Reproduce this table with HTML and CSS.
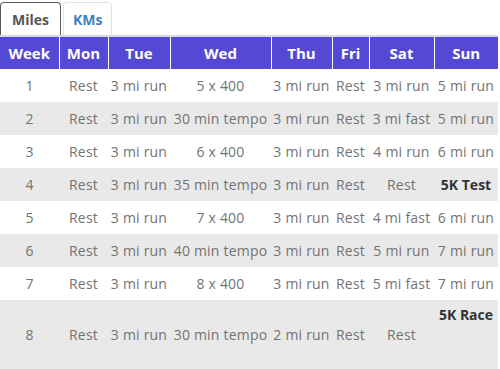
FILE: index.html
```html
<!DOCTYPE html>
<html>
<head>
<meta charset="utf-8">
<link rel="stylesheet" href="styles.css">
</head>
<body>
<div class="wrap">
  <div class="tabs">
    <div class="tab active">Miles</div>
    <div class="tab">KMs</div>
  </div>
  <table class="plan">
    <colgroup>
      <col class="c-week"><col class="c-mon"><col class="c-tue"><col class="c-wed">
      <col class="c-thu"><col class="c-fri"><col class="c-sat"><col class="c-sun">
    </colgroup>
    <thead>
      <tr><th>Week</th><th>Mon</th><th>Tue</th><th>Wed</th><th>Thu</th><th>Fri</th><th>Sat</th><th>Sun</th></tr>
    </thead>
    <tbody>
      <tr><td>1</td><td>Rest</td><td>3 mi run</td><td>5 x 400</td><td>3 mi run</td><td>Rest</td><td>3 mi run</td><td>5 mi run</td></tr>
      <tr><td>2</td><td>Rest</td><td>3 mi run</td><td>30 min tempo</td><td>3 mi run</td><td>Rest</td><td>3 mi fast</td><td>5 mi run</td></tr>
      <tr><td>3</td><td>Rest</td><td>3 mi run</td><td>6 x 400</td><td>3 mi run</td><td>Rest</td><td>4 mi run</td><td>6 mi run</td></tr>
      <tr><td>4</td><td>Rest</td><td>3 mi run</td><td>35 min tempo</td><td>3 mi run</td><td>Rest</td><td>Rest</td><td><strong>5K Test</strong></td></tr>
      <tr><td>5</td><td>Rest</td><td>3 mi run</td><td>7 x 400</td><td>3 mi run</td><td>Rest</td><td>4 mi fast</td><td>6 mi run</td></tr>
      <tr><td>6</td><td>Rest</td><td>3 mi run</td><td>40 min tempo</td><td>3 mi run</td><td>Rest</td><td>5 mi run</td><td>7 mi run</td></tr>
      <tr><td>7</td><td>Rest</td><td>3 mi run</td><td>8 x 400</td><td>3 mi run</td><td>Rest</td><td>5 mi fast</td><td>7 mi run</td></tr>
      <tr class="tall"><td>8</td><td>Rest</td><td>3 mi run</td><td>30 min tempo</td><td>2 mi run</td><td>Rest</td><td>Rest</td><td class="top"><strong>5K Race</strong></td></tr>
    </tbody>
  </table>
</div>
</body>
</html>
```

FILE: styles.css
```css
html, body {
  margin: 0;
  padding: 0;
  background: #fff;
}
body {
  font-family: "Open Sans", "Liberation Sans", sans-serif;
}
.wrap {
  width: 498px;
}
.tabs {
  display: flex;
  gap: 2px;
  padding-top: 2px;
  border-bottom: 2px solid #d8d8d8;
}
.tab {
  height: 33px;
  box-sizing: border-box;
  padding: 0 9px;
  border: 1px solid #e2e2e2;
  border-bottom: none;
  border-radius: 4px 4px 0 0;
  display: flex;
  align-items: center;
  font-size: 14px;
  font-weight: 700;
  color: #3b7ec2;
}
.tab.active {
  border-color: #5a5a5a;
  color: #555;
  padding: 0 11px;
}
.plan {
  width: 498px;
  border-collapse: collapse;
  table-layout: fixed;
}
.c-week { width: 59px; }
.c-mon { width: 49px; }
.c-tue { width: 62px; }
.c-wed { width: 101px; }
.c-thu { width: 61px; }
.c-fri { width: 37px; }
.c-sat { width: 65px; }
.c-sun { width: 64px; }
.plan th {
  height: 32px;
  padding: 0;
  background: #5548d5;
  color: #fff;
  font-size: 15px;
  font-weight: 700;
  text-align: center;
  border-right: 1px solid #fff;
}
.plan th:last-child {
  border-right: none;
}
.plan td {
  height: 33px;
  padding: 0;
  text-align: center;
  vertical-align: middle;
  font-size: 14px;
  letter-spacing: 0.2px;
  color: #737373;
  white-space: nowrap;
}
.plan tbody tr:nth-child(even) td {
  background: #e9e9e9;
}
.plan td strong {
  color: #333;
  font-weight: 700;
  letter-spacing: 0;
}
.plan tr.tall td {
  height: 64px;
  padding-bottom: 2px;
}
.plan td.top {
  vertical-align: top;
  padding-top: 5px;
}
```
